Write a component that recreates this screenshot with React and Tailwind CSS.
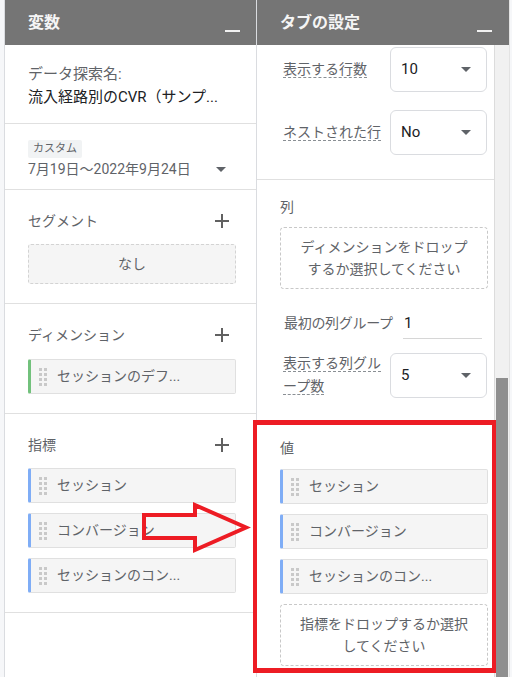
import React from "react";

// Explorer side panels: variables on the left, tab settings on the right.

const Caret = () => (
  <span className="w-0 h-0 border-x-[5px] border-x-transparent border-t-[5px] border-t-[#5f6368]" />
);

const PlusIcon = () => (
  <svg width="16" height="16" viewBox="0 0 16 16" className="text-[#616161] mr-[6px]">
    <path d="M8 1v14M1 8h14" stroke="currentColor" strokeWidth="2" fill="none" />
  </svg>
);

const DragHandle = () => (
  <svg width="8" height="18" viewBox="0 0 8 18" className="shrink-0">
    {[0, 5, 10, 15].map((y) =>
      [0, 5].map((x) => <rect key={`${x}-${y}`} x={x} y={y} width="3" height="3" fill="#c9c9c9" />)
    )}
  </svg>
);

const PanelHeader = ({ title, className }) => (
  <div className={`h-[45px] shrink-0 bg-[#757575] flex justify-between ${className}`}>
    <span className="self-center text-[16px] font-bold text-[#f5f5f5]">{title}</span>
    <span className="self-end mb-[13px] w-[15px] h-[2px] bg-[#f1f1f1]" />
  </div>
);

/**
 * A field pill with a coloured left edge and a drag handle.
 */
const FieldChip = ({ label, accent }) => (
  <div className={`h-[35px] flex items-center gap-[10px] pl-[8px] bg-[#f5f5f5] border border-[#e0e0e0] border-l-[3px] rounded-[2px] ${accent}`}>
    <DragHandle />
    <span className="text-[14px] text-[#5f6368] whitespace-nowrap">{label}</span>
  </div>
);

const SectionTitle = ({ title, addable }) => (
  <div className="h-[22px] flex items-center justify-between">
    <span className="text-[14px] text-[#5f6368]">{title}</span>
    {addable && <PlusIcon />}
  </div>
);

const DropZone = ({ children }) => (
  <div className="border border-dashed border-[#c8c8c8] rounded-[4px] py-[8px] text-center text-[14px] leading-[22px] text-[#5f6368]">
    {children}
  </div>
);

const SelectBox = ({ value }) => (
  <div className="w-[97px] h-[45px] shrink-0 border border-[#dadce0] rounded-[6px] flex items-center justify-between pl-[10px] pr-[15px]">
    <span className="text-[15px] text-[#202124]">{value}</span>
    <Caret />
  </div>
);

const SettingLabel = ({ children }) => (
  <div className="w-[107px] shrink-0 text-[14px] leading-[23px] text-[#5f6368]">
    <span className="border-b border-dashed border-[#8a8f94]">{children}</span>
  </div>
);

const metrics = ["セッション", "コンバージョン", "セッションのコン..."];

const VariablesPanel = () => (
  <div className="ml-[4px] w-[253px] shrink-0 bg-white border-x border-[#dadce0] flex flex-col">
    <PanelHeader title="変数" className="pl-[23px] pr-[16px]" />

    <div className="pl-[23px] pr-[20px] pt-[18px] pb-[14px] border-b border-[#e0e0e0] text-[15px] leading-[23px]">
      <div className="text-[#5f6368]">データ探索名:</div>
      <div className="text-[#202124] whitespace-nowrap">流入経路別のCVR（サンプ...</div>
    </div>

    <div className="pl-[23px] pr-[20px] pt-[16px] pb-[9px] border-b border-[#e0e0e0] flex flex-col">
      <span className="block w-fit h-[18px] px-[5px] bg-[#f1f3f4] rounded-[2px] text-[11px] leading-[18px] text-[#5f6368]">カスタム</span>
      <div className="h-[22px] flex items-center justify-between">
        <span className="text-[14px] text-[#5f6368]">7月19日～2022年9月24日</span>
        <span className="mr-[10px] flex"><Caret /></span>
      </div>
    </div>

    <div className="pl-[23px] pr-[20px] pt-[20px] pb-[19px] border-b border-[#e0e0e0]">
      <SectionTitle title="セグメント" addable />
      <div className="mt-[12px] h-[40px] flex items-center justify-center bg-[#f5f5f5] border border-dashed border-[#d3d3d3] rounded-[3px] text-[14px] text-[#5f6368]">
        なし
      </div>
    </div>

    <div className="pl-[23px] pr-[20px] pt-[20px] pb-[19px] border-b border-[#e0e0e0]">
      <SectionTitle title="ディメンション" addable />
      <div className="mt-[13px]">
        <FieldChip label="セッションのデフ..." accent="border-l-[#72c17c]" />
      </div>
    </div>

    <div className="pl-[23px] pr-[20px] pt-[20px] pb-[19px] border-b border-[#e0e0e0]">
      <SectionTitle title="指標" addable />
      <div className="mt-[12px] flex flex-col gap-[10px]">
        {metrics.map((m) => (
          <FieldChip key={m} label={m} accent="border-l-[#7fadf6]" />
        ))}
      </div>
    </div>
  </div>
);

const TabSettingsPanel = () => (
  <div className="w-[252px] shrink-0 bg-white flex flex-col">
    <PanelHeader title="タブの設定" className="pl-[23px] pr-[17px]" />
    <div className="flex flex-1 min-h-0">
      <div className="w-[237px] shrink-0 overflow-hidden">
        <div className="pl-[26px] pr-[6px] pt-[2px] pb-[24px] border-b border-[#e0e0e0] flex flex-col gap-[18px]">
          <div className="flex items-center">
            <SettingLabel>表示する行数</SettingLabel>
            <SelectBox value="10" />
          </div>
          <div className="flex items-center">
            <SettingLabel>ネストされた行</SettingLabel>
            <SelectBox value="No" />
          </div>
        </div>

        <div className="pt-[16px] pb-[23px] border-b border-[#e0e0e0]">
          <div className="pl-[23px] pr-[6px]">
            <SectionTitle title="列" />
            <div className="mt-[9px]">
              <DropZone>
                ディメンションをドロップ
                <br />
                するか選択してください
              </DropZone>
            </div>
          </div>
          <div className="pl-[27px] pr-[6px] mt-[19px] flex items-center">
            <div className="w-[119px] shrink-0 whitespace-nowrap text-[14px] tracking-[-0.3px] text-[#5f6368]">最初の列グループ</div>
            <div className="w-[79px] h-[31px] flex items-center pl-[1px] border-b border-[#d6d6d6] text-[15px] text-[#202124]">
              1
            </div>
          </div>
          <div className="pl-[26px] pr-[6px] mt-[13px] flex items-center">
            <SettingLabel>
              表示する列グル
              <br />
              ープ数
            </SettingLabel>
            <SelectBox value="5" />
          </div>
        </div>

        <div className="pl-[23px] pr-[6px] pt-[15px]">
          <SectionTitle title="値" />
          <div className="mt-[10px] flex flex-col gap-[10px]">
            {metrics.map((m) => (
              <FieldChip key={m} label={m} accent="border-l-[#7fadf6]" />
            ))}
            <DropZone>
              指標をドロップするか選択
              <br />
              してください
            </DropZone>
          </div>
        </div>
      </div>

      {/* scrollbar */}
      <div className="w-[15px] shrink-0 border-l border-[#dcdcdc] bg-[#f1f1f1] flex flex-col">
        <div className="h-[333px] shrink-0" />
        <div className="flex-1 mx-[1px] bg-[#8f8f8f]" />
      </div>
    </div>
  </div>
);

export default function App() {
  return (
    <div className="relative w-[512px] h-[677px] overflow-hidden flex bg-[#f6f7f9] font-['Roboto','Noto_Sans_CJK_JP',sans-serif]">
      <VariablesPanel />
      <TabSettingsPanel />
      <div className="flex-1 border-l border-[#e3e3e3]" />

      {/* callout: highlight the values block and point at it */}
      <div className="absolute left-[253px] top-[420px] w-[243px] h-[253px] border-[#ed1c24] border-x-[4px] border-y-[5px] pointer-events-none" />
      <svg className="absolute left-0 top-0 pointer-events-none" width="512" height="677">
        <polygon
          points="144,515 195,515 195,505 246,527.5 195,550 195,538 144,538"
          fill="none"
          stroke="#ed1c24"
          strokeWidth="4"
        />
      </svg>
    </div>
  );
}
